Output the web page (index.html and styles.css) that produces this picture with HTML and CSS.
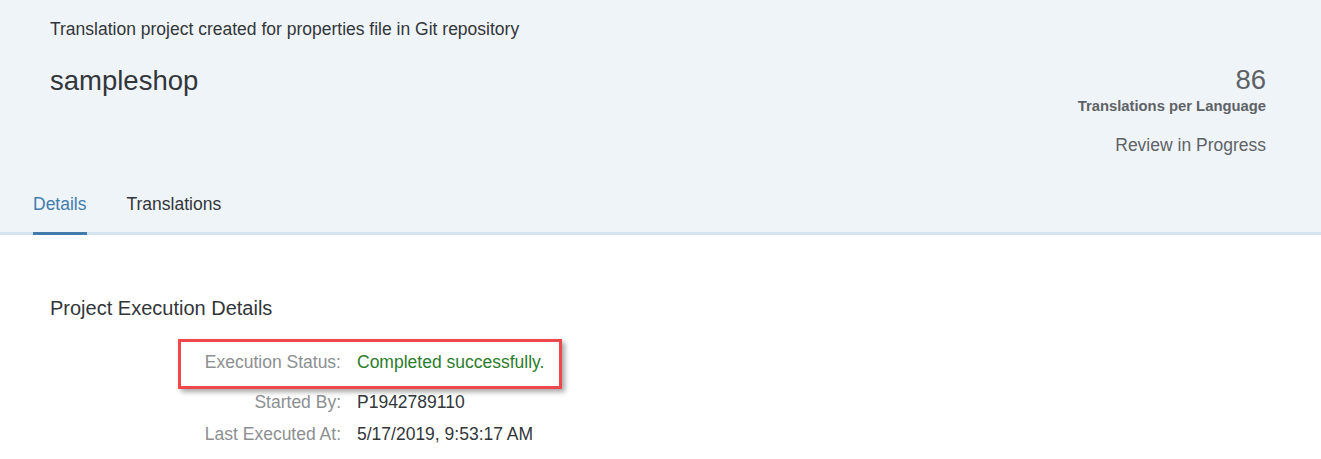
FILE: index.html
```html
<!DOCTYPE html>
<html>
<head>
<meta charset="utf-8">
<link rel="stylesheet" href="styles.css">
</head>
<body>
<header class="header">
  <div class="header-main">
    <div class="header-left">
      <div class="subtitle">Translation project created for properties file in Git repository</div>
      <h1 class="title">sampleshop</h1>
    </div>
    <div class="header-right">
      <div class="kpi-value">86</div>
      <div class="kpi-label">Translations per Language</div>
      <div class="status">Review in Progress</div>
    </div>
  </div>
  <nav class="tabs">
    <div class="tab tab-active">Details</div>
    <div class="tab">Translations</div>
  </nav>
</header>
<main class="content">
  <h2 class="section-title">Project Execution Details</h2>
  <div class="form">
    <div class="row row-highlight">
      <div class="label">Execution Status:</div>
      <div class="value value-success">Completed successfully.</div>
    </div>
    <div class="row">
      <div class="label">Started By:</div>
      <div class="value">P1942789110</div>
    </div>
    <div class="row">
      <div class="label">Last Executed At:</div>
      <div class="value">5/17/2019, 9:53:17 AM</div>
    </div>
  </div>
</main>
</body>
</html>
```

FILE: styles.css
```css
html, body {
  margin: 0;
  padding: 0;
  background: #ffffff;
  font-family: "Liberation Sans", Arial, sans-serif;
  color: #32363a;
}
.header {
  background: #eff4f9;
  border-bottom: 3px solid #d3e3f0;
}
.header-main {
  display: flex;
  justify-content: space-between;
  padding: 19px 55px 0 50px;
}
.subtitle {
  font-size: 17.5px;
  line-height: 20px;
  color: #32363a;
}
.title {
  margin: 26px 0 0 0;
  font-size: 27.5px;
  font-weight: normal;
  line-height: 32px;
  color: #32363a;
}
.header-right {
  display: flex;
  flex-direction: column;
  align-items: flex-end;
  padding-top: 45px;
}
.kpi-value {
  font-size: 27.5px;
  line-height: 32px;
  color: #5e6266;
}
.kpi-label {
  margin-top: 1px;
  font-size: 14.8px;
  font-weight: bold;
  line-height: 18px;
  color: #5e6266;
}
.status {
  margin-top: 19px;
  font-size: 17.5px;
  line-height: 22px;
  color: #5e6266;
}
.tabs {
  display: flex;
  gap: 40px;
  padding: 37px 0 0 33px;
  margin-bottom: -3px;
}
.tab {
  font-size: 17.5px;
  line-height: 22px;
  padding-bottom: 17px;
  border-bottom: 3px solid transparent;
  color: #32363a;
}
.tab-active {
  color: #427cac;
  border-bottom-color: #427cac;
}
.content {
  padding: 61px 0 0 50px;
}
.section-title {
  margin: 0;
  font-size: 20px;
  font-weight: normal;
  line-height: 24px;
  color: #32363a;
}
.form {
  margin-top: 19px;
  margin-left: 128px;
  width: 384px;
}
.row {
  display: flex;
  gap: 16px;
  font-size: 17.5px;
  line-height: 32px;
  padding: 0 3px;
}
.row-highlight {
  border: 3px solid #f0474b;
  box-shadow: 3px 3px 5px rgba(0, 0, 0, 0.35);
  padding: 4px 0 8px;
  margin-bottom: -3px;
}
.label {
  width: 160px;
  text-align: right;
  color: #8c8f92;
}
.value {
  color: #32363a;
}
.value-success {
  color: #2b7d2b;
}
```
